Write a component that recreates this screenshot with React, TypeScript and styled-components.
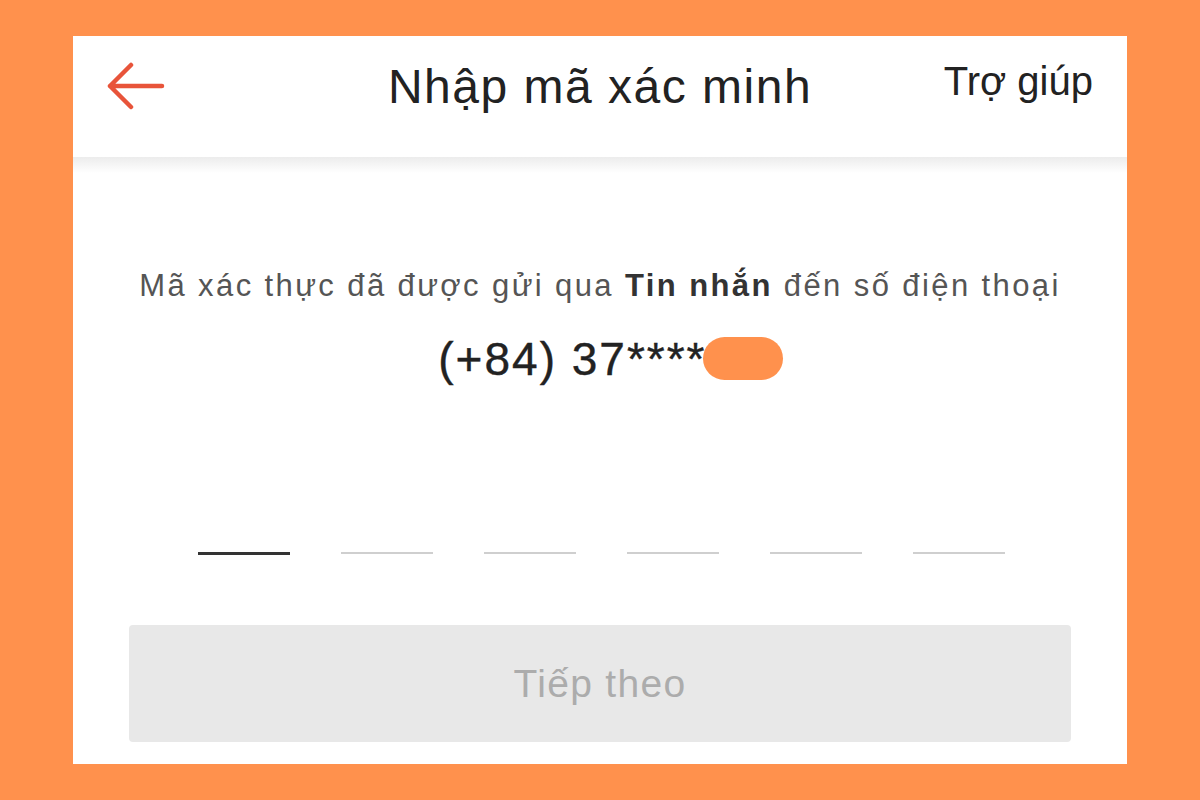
import React from "react";
import styled, { createGlobalStyle } from "styled-components";

const Global = createGlobalStyle`
  html, body { margin: 0; padding: 0; background: #ff914d; }
  body { font-family: "Liberation Sans", Arial, sans-serif; }
  #root { width: 1200px; height: 800px; }
`;

const Frame = styled.div`
  width: 1200px;
  height: 800px;
  box-sizing: border-box;
  padding: 36px 73px;
  background: #ff914d;
`;

const Panel = styled.div`
  width: 1054px;
  height: 728px;
  background: #ffffff;
  display: flex;
  flex-direction: column;
`;

const Header = styled.header`
  height: 121px;
  display: grid;
  grid-template-columns: 200px 1fr 200px;
  align-items: center;
  padding: 0 34px 0 34px;
  box-sizing: border-box;
  position: relative;
  &::after {
    content: "";
    position: absolute;
    left: 0;
    right: 0;
    top: 100%;
    height: 16px;
    background: linear-gradient(#ececec, rgba(255, 255, 255, 0));
  }
`;

const BackButton = styled.div`
  display: flex;
  align-items: center;
  color: #e8543a;
  margin-top: -20px;
`;

const Title = styled.h1`
  margin: 0;
  text-align: center;
  font-size: 48px;
  font-weight: 400;
  letter-spacing: 1.5px;
  color: #222;
  margin-top: -20px;
`;

const Help = styled.div`
  text-align: right;
  font-size: 40px;
  color: #222;
  margin-top: -30px;
`;

const Body = styled.main`
  flex: 1;
  display: flex;
  flex-direction: column;
  align-items: center;
  padding: 111px 40px 0;
`;

const Message = styled.p`
  margin: 0;
  font-size: 31px;
  letter-spacing: 2.4px;
  color: #555;
  text-align: center;
  white-space: nowrap;
  b { color: #333; font-weight: 700; }
`;

const Phone = styled.div`
  position: relative;
  margin-top: 28px;
  font-size: 46px;
  font-weight: 500;
  letter-spacing: 2px;
  color: #222;
  -webkit-text-stroke: 0.4px #222;
`;

const Mask = styled.span`
  position: absolute;
  left: 265px;
  top: 5px;
  width: 80px;
  height: 43px;
  border-radius: 22px;
  background: #ff914d;
`;

const Slots = styled.div`
  display: flex;
  gap: 51px;
  margin-top: 166px;
  margin-left: 2px;
`;

const Slot = styled.div<{ $active?: boolean }>`
  width: 92px;
  height: ${(p) => (p.$active ? 3 : 2)}px;
  background: ${(p) => (p.$active ? "#333" : "#cfcfcf")};
`;

const NextButton = styled.button`
  margin-top: 70px;
  width: 942px;
  height: 117px;
  border: none;
  border-radius: 4px;
  background: #e8e8e8;
  color: #acacac;
  font-family: inherit;
  font-size: 39px;
  letter-spacing: 1.3px;
  padding: 0;
`;

export default function App() {
  return (
    <>
      <Global />
      <Frame>
        <Panel>
          <Header>
            <BackButton>
              <svg width="58" height="50" viewBox="0 0 58 50" fill="none">
                <path
                  d="M3 24 H55 M24 3 L3 24 L24 45"
                  stroke="currentColor"
                  strokeWidth="4.5"
                  strokeLinecap="round"
                  strokeLinejoin="round"
                />
              </svg>
            </BackButton>
            <Title>Nhập mã xác minh</Title>
            <Help>Trợ giúp</Help>
          </Header>
          <Body>
            <Message>
              Mã xác thực đã được gửi qua <b>Tin nhắn</b> đến số điện thoại
            </Message>
            <Phone>
              (+84) 37****66
              <Mask />
            </Phone>
            <Slots>
              <Slot $active />
              <Slot />
              <Slot />
              <Slot />
              <Slot />
              <Slot />
            </Slots>
            <NextButton>Tiếp theo</NextButton>
          </Body>
        </Panel>
      </Frame>
    </>
  );
}
